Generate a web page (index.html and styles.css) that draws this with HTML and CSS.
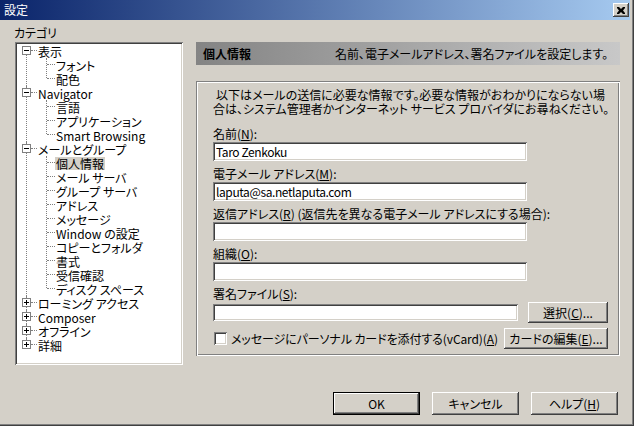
FILE: index.html
```html
<!DOCTYPE html>
<html lang="ja">
<head>
    <meta charset="UTF-8">
    <title>設定</title>
    <link rel="stylesheet" href="styles.css">
</head>
<body>
    <div class="window">
        <div class="titlebar">
            <span class="title">設定</span>
            <span class="close-btn">
                <svg width="8" height="7" viewBox="0 0 8 7"><path d="M0 0h2l2 2 2-2h2v1L6 3.5 8 6v1H6L4 5 2 7H0V6l2-2.5L0 1z" fill="#000"/></svg>
            </span>
        </div>

        <div class="main">
            <div class="sidebar">
                <div class="sidebar-label">カテゴリ</div>
                <div class="tree">
                    <div class="node">
                        <div class="row"><span class="toggle open"></span><span class="stem"></span><span class="label">表示</span></div>
                        <div class="children">
                            <div class="row"><span class="stem"></span><span class="label">フォント</span></div>
                            <div class="row"><span class="stem"></span><span class="label">配色</span></div>
                        </div>
                    </div>
                    <div class="node">
                        <div class="row"><span class="toggle open"></span><span class="stem"></span><span class="label">Navigator</span></div>
                        <div class="children">
                            <div class="row"><span class="stem"></span><span class="label">言語</span></div>
                            <div class="row"><span class="stem"></span><span class="label">アプリケーション</span></div>
                            <div class="row"><span class="stem"></span><span class="label">Smart Browsing</span></div>
                        </div>
                    </div>
                    <div class="node">
                        <div class="row"><span class="toggle open"></span><span class="stem"></span><span class="label">メールとグループ</span></div>
                        <div class="children">
                            <div class="row"><span class="stem"></span><span class="label selected">個人情報</span></div>
                            <div class="row"><span class="stem"></span><span class="label">メール サーバ</span></div>
                            <div class="row"><span class="stem"></span><span class="label">グループ サーバ</span></div>
                            <div class="row"><span class="stem"></span><span class="label">アドレス</span></div>
                            <div class="row"><span class="stem"></span><span class="label">メッセージ</span></div>
                            <div class="row"><span class="stem"></span><span class="label">Window の設定</span></div>
                            <div class="row"><span class="stem"></span><span class="label">コピーとフォルダ</span></div>
                            <div class="row"><span class="stem"></span><span class="label">書式</span></div>
                            <div class="row"><span class="stem"></span><span class="label">受信確認</span></div>
                            <div class="row"><span class="stem"></span><span class="label">ディスク スペース</span></div>
                        </div>
                    </div>
                    <div class="node">
                        <div class="row"><span class="toggle"></span><span class="stem"></span><span class="label">ローミング アクセス</span></div>
                    </div>
                    <div class="node">
                        <div class="row"><span class="toggle"></span><span class="stem"></span><span class="label">Composer</span></div>
                    </div>
                    <div class="node">
                        <div class="row"><span class="toggle"></span><span class="stem"></span><span class="label">オフライン</span></div>
                    </div>
                    <div class="node">
                        <div class="row"><span class="toggle"></span><span class="stem"></span><span class="label">詳細</span></div>
                    </div>
                </div>
            </div>

            <div class="panel">
                <div class="panel-header">
                    <span class="panel-title">個人情報</span>
                    <span class="panel-desc">名前、電子メールアドレス、署名ファイルを設定します。</span>
                </div>

                <div class="group">
                    <p class="intro">以下はメールの送信に必要な情報です。必要な情報がおわかりにならない場<br>合は、システム管理者かインターネット サービス プロバイダにお尋ねください。</p>

                    <div class="field">
                        <label for="name">名前(<u>N</u>):</label>
                        <input type="text" id="name" class="textbox" value="Taro Zenkoku">
                    </div>
                    <div class="field">
                        <label for="email">電子メール アドレス(<u>M</u>):</label>
                        <input type="text" id="email" class="textbox" value="laputa@sa.netlaputa.com">
                    </div>
                    <div class="field">
                        <label for="reply">返信アドレス(<u>R</u>) (返信先を異なる電子メール アドレスにする場合):</label>
                        <input type="text" id="reply" class="textbox">
                    </div>
                    <div class="field">
                        <label for="org">組織(<u>O</u>):</label>
                        <input type="text" id="org" class="textbox">
                    </div>
                    <div class="field">
                        <label for="sig">署名ファイル(<u>S</u>):</label>
                        <div class="file-row">
                            <input type="text" id="sig" class="textbox short">
                            <button class="btn btn-choose">選択(<u>C</u>)...</button>
                        </div>
                    </div>
                    <div class="vcard-row">
                        <span class="checkbox"></span>
                        <span class="vcard-text">メッセージにパーソナル カードを添付する(vCard)(<u>A</u>)</span>
                        <button class="btn btn-card">カードの編集(<u>E</u>)...</button>
                    </div>
                </div>
            </div>
        </div>

        <div class="footer">
            <button class="btn btn-default">OK</button>
            <button class="btn">キャンセル</button>
            <button class="btn">ヘルプ(<u>H</u>)</button>
        </div>
    </div>
</body>
</html>
```

FILE: styles.css
```css
* {
    margin: 0;
    padding: 0;
    box-sizing: border-box;
}

body {
    font-family: "Noto Sans CJK JP", sans-serif;
    font-size: 12px;
    font-feature-settings: "palt";
    color: #000;
    background-color: #d4d0c8;
}

.window {
    width: 634px;
    height: 426px;
    padding: 0 4px 4px 0;
    background-color: #d4d0c8;
    box-shadow: inset -1px -1px #404040, inset -2px -2px #808080;
}

/* title bar */
.titlebar {
    height: 20px;
    display: flex;
    align-items: center;
    justify-content: space-between;
    padding: 0 1px 0 4px;
    background: linear-gradient(to right, #0a246a, #a6caf0);
}

.title {
    color: #fff;
    line-height: 14px;
}

.close-btn {
    width: 16px;
    height: 14px;
    display: flex;
    align-items: center;
    justify-content: center;
    background-color: #d4d0c8;
    box-shadow: inset -1px -1px #404040, inset 1px 1px #fff, inset -2px -2px #808080;
}

.close-btn svg {
    display: block;
    margin-left: -1px;
}

/* layout */
.main {
    display: flex;
    gap: 13px;
    padding-left: 15px;
}

.sidebar {
    width: 168px;
}

.sidebar-label {
    padding-top: 6px;
    margin: 0 0 2px -1px;
    line-height: 14px;
}

/* tree */
.tree {
    height: 323px;
    padding: 2px;
    background-color: #fff;
    box-shadow: inset 1px 1px #808080, inset -1px -1px #fff, inset 2px 2px #404040, inset -2px -2px #d4d0c8;
    overflow: hidden;
}

.node {
    position: relative;
}

.node::before {
    content: "";
    position: absolute;
    left: 9px;
    top: 0;
    bottom: 0;
    border-left: 1px dotted #808080;
}

.node:first-child::before {
    top: 6px;
}

.node:last-child::before {
    bottom: auto;
    height: 6px;
}

.row {
    display: flex;
    align-items: flex-start;
    height: 14px;
    white-space: nowrap;
}

.node > .row {
    padding-left: 5px;
}

.toggle {
    position: relative;
    width: 9px;
    height: 9px;
    margin-top: 2px;
    border: 1px solid #808080;
    background-color: #fff;
}

.toggle::before {
    content: "";
    position: absolute;
    left: 1px;
    top: 3px;
    width: 5px;
    height: 1px;
    background-color: #000;
}

.toggle:not(.open)::after {
    content: "";
    position: absolute;
    left: 3px;
    top: 1px;
    width: 1px;
    height: 5px;
    background-color: #000;
}

.stem {
    width: 6px;
    margin-top: 6px;
    border-top: 1px dotted #808080;
}

.children {
    position: relative;
}

.children::before {
    content: "";
    position: absolute;
    left: 29px;
    top: 0;
    height: calc(100% - 8px);
    border-left: 1px dotted #808080;
}

.children .row {
    padding-left: 30px;
}

.children .stem {
    width: 8px;
}

.label {
    margin-top: 1px;
    padding: 0 1px;
    line-height: 13px;
}

.label.selected {
    background-color: #d4d0c8;
}

/* right panel */
.panel {
    width: 424px;
    padding-top: 22px;
}

.panel-header {
    height: 23px;
    margin-bottom: 16px;
    display: flex;
    align-items: center;
    justify-content: space-between;
    padding: 0 12px 0 7px;
    background: linear-gradient(to right, #848484, #c8c8c8);
}

.panel-title {
    font-weight: bold;
}

.group {
    height: 275px;
    padding: 7px 12px 0 17px;
    box-shadow: inset 1px 1px #808080, inset 2px 2px #fff, inset -1px -1px #fff, inset -2px -2px #808080;
}

.intro {
    text-align: center;
    line-height: 14px;
    margin-bottom: 11px;
    white-space: nowrap;
}

.field {
    margin-bottom: 6px;
}

.field label {
    display: block;
    line-height: 14px;
    margin-bottom: 1px;
    white-space: nowrap;
}

.textbox {
    display: block;
    width: 314px;
    height: 19px;
    padding: 0 3px;
    border: none;
    outline: none;
    font-family: inherit;
    font-size: 12px;
    letter-spacing: -0.4px;
    color: #000;
    background-color: #fff;
    box-shadow: inset 1px 1px #808080, inset -1px -1px #fff, inset 2px 2px #404040, inset -2px -2px #d4d0c8;
}

.file-row {
    display: flex;
    align-items: flex-start;
}

.textbox.short {
    width: 305px;
    height: 17px;
    margin-top: 2px;
}

.vcard-row {
    display: flex;
    align-items: center;
    margin-top: -1px;
}

.checkbox {
    width: 13px;
    height: 13px;
    margin-left: 1px;
    background-color: #fff;
    box-shadow: inset 1px 1px #808080, inset -1px -1px #fff, inset 2px 2px #404040, inset -2px -2px #d4d0c8;
}

.vcard-text {
    margin-left: 4px;
    white-space: nowrap;
    letter-spacing: -0.1px;
}

/* buttons */
.btn {
    height: 23px;
    width: 87px;
    border: none;
    font-family: inherit;
    font-size: 12px;
    font-feature-settings: "palt";
    color: #000;
    background-color: #d4d0c8;
    box-shadow: inset -1px -1px #404040, inset 1px 1px #fff, inset -2px -2px #808080;
}

.btn-choose {
    width: 80px;
    height: 21px;
    margin-left: 10px;
}

.btn-card {
    width: 104px;
    height: 21px;
    margin-left: auto;
}

.btn-default {
    border: 1px solid #000;
}

.footer {
    display: flex;
    justify-content: flex-end;
    gap: 12px;
    padding: 27px 12px 0 0;
}
```
